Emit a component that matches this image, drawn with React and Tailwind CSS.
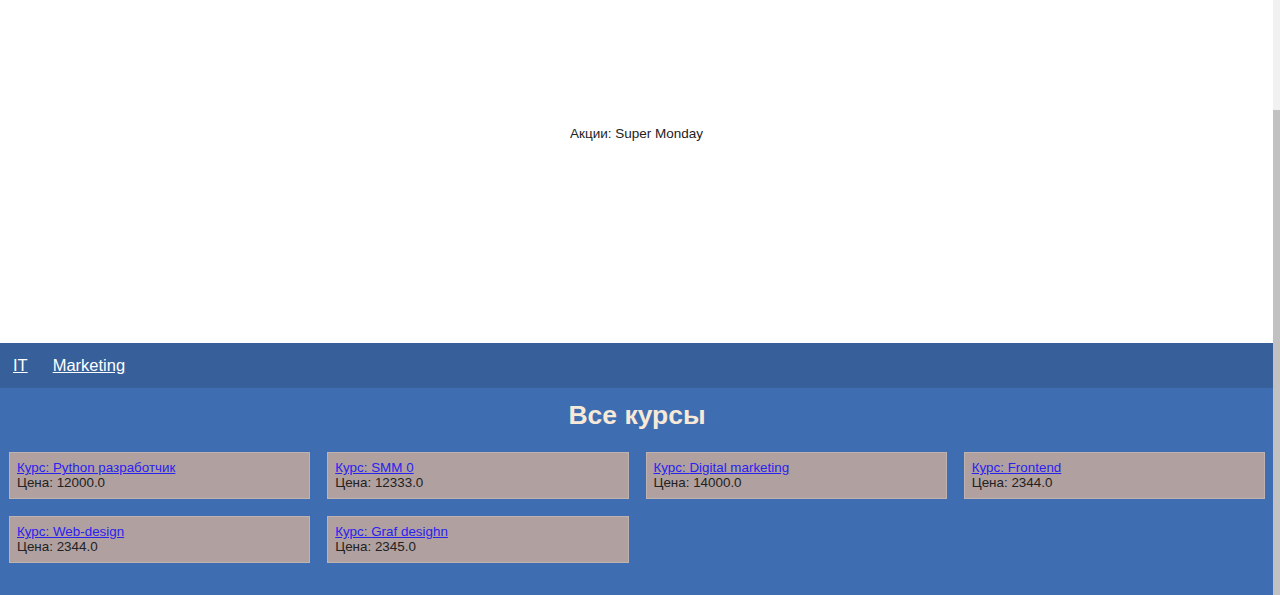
export default function App() {
  const courses = [
    { name: "Python разработчик", price: "12000.0" },
    { name: "SMM 0", price: "12333.0" },
    { name: "Digital marketing", price: "14000.0" },
    { name: "Frontend", price: "2344.0" },
    { name: "Web-design", price: "2344.0" },
    { name: "Graf desighn", price: "2345.0" },
  ];

  return (
    <div className="flex w-full h-[595px] overflow-hidden font-['Liberation_Sans',Arial,sans-serif]">
      <div className="flex-1 flex flex-col">
        {/* promo */}
        <div className="h-[343px] bg-white pt-[126px] text-center text-[13.5px] leading-4 text-[#222]">
          Акции: Super Monday
        </div>

        {/* nav */}
        <nav className="h-[45px] bg-[#375f99] flex items-center gap-[25px] px-[13px]">
          <a href="#" className="text-[16.5px] text-white underline">IT</a>
          <a href="#" className="text-[16.5px] text-white underline">Marketing</a>
        </nav>

        {/* courses */}
        <main className="flex-1 bg-[#3e6eb1] pl-[9px] pr-[8px]">
          <h1 className="text-center text-[26.5px] font-bold text-[#f7e9d8] pt-[12px] pb-[22px] leading-[30px]">
            Все курсы
          </h1>
          <div className="grid grid-cols-4 gap-x-[17px] gap-y-[17px]">
            {courses.map((c) => (
              <div
                key={c.name}
                className="h-[47px] bg-[#b0a09f] border border-[#c0b2b0] px-[7px] pt-[7px] text-[13.4px] leading-[15px]"
              >
                <a href="#" className="text-[#2a22ee] underline">Курс: {c.name}</a>
                <div className="text-[#222]">Цена: {c.price}</div>
              </div>
            ))}
          </div>
        </main>
      </div>

      {/* scrollbar */}
      <div className="w-[7px] h-full bg-[#f1f1f1] flex flex-col">
        <div className="h-[110px]" />
        <div className="flex-1 bg-[#c1c1c1]" />
      </div>
    </div>
  );
}
